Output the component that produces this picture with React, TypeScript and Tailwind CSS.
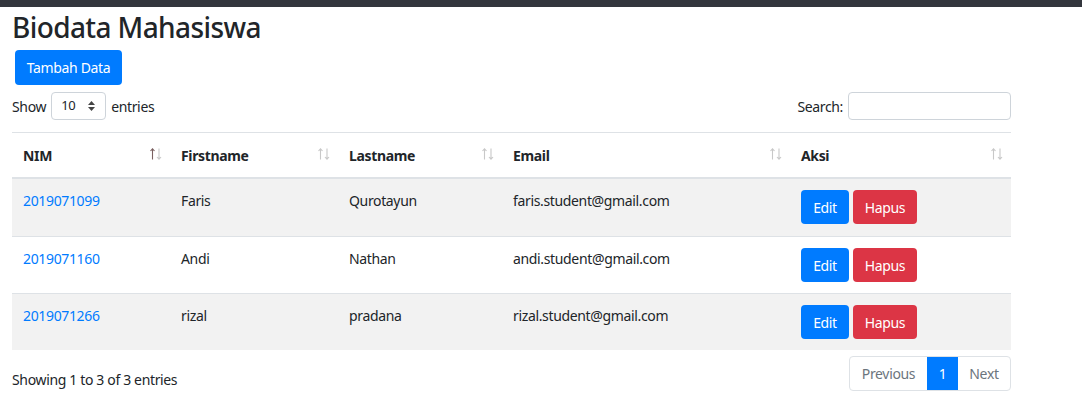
const rows = [
  { nim: "2019071099", first: "Faris", last: "Qurotayun", email: "faris.student@gmail.com" },
  { nim: "2019071160", first: "Andi", last: "Nathan", email: "andi.student@gmail.com" },
  { nim: "2019071266", first: "rizal", last: "pradana", email: "rizal.student@gmail.com" },
];

const cols = [
  { label: "NIM", w: "w-[158px]", active: true },
  { label: "Firstname", w: "w-[168px]" },
  { label: "Lastname", w: "w-[164px]" },
  { label: "Email", w: "w-[288px]" },
  { label: "Aksi", w: "w-[221px]" },
];

function SortIcon({ active }: { active?: boolean }) {
  return (
    <svg width="12" height="12" viewBox="0 0 12 12" fill="none" strokeWidth="1.1" className="absolute right-[8px] top-[15px]">
      <path d="M2.5 11.5 V1 M0.5 3 L2.5 0.8 L4.5 3" stroke={active ? "#7a6060" : "#c8c8c8"} />
      <path d="M9 0.5 V11 M7 9 L9 11.2 L11 9" stroke="#c8c8c8" />
    </svg>
  );
}

export default function App() {
  return (
    <div className="w-[1082px] h-[420px] bg-white text-[#212529] font-['Noto_Sans',sans-serif] text-[14px] tracking-[-0.35px]">
      <div className="h-[7px] bg-[#33363d]" />
      <div className="px-[12px] w-[999px] box-content">
        <h3 className="text-[28px] leading-[36px] font-medium mt-[2px] tracking-[-0.6px]">Biodata Mahasiswa</h3>
        <button className="ml-[3px] mt-[5px] h-[35px] w-[107px] bg-[#007bff] text-white rounded-[4px] text-[14px]">
          Tambah Data
        </button>
        <div className="flex justify-between items-center mt-[7px] h-[28px]">
          <div className="flex items-center gap-[5px]">
            <span>Show</span>
            <div className="w-[55px] h-[28px] border border-[#ced4da] rounded-[4px] flex items-center justify-between pl-[9px] pr-[10px] text-[13px]">
              <span>10</span>
              <svg width="7" height="10" viewBox="0 0 7 10" className="text-[#444]">
                <path d="M3.5 0 L7 4 L0 4 Z M0 6 L7 6 L3.5 10 Z" fill="currentColor" />
              </svg>
            </div>
            <span>entries</span>
          </div>
          <div className="flex items-center gap-[5px]">
            <span>Search:</span>
            <div className="w-[163px] h-[28px] border border-[#ced4da] rounded-[4px]" />
          </div>
        </div>
        <div className="mt-[12px] border-t border-[#dee2e6] w-[999px]">
          <div className="flex h-[46px] border-b-2 border-[#dee2e6] font-bold">
            {cols.map((c) => (
              <div key={c.label} className={`${c.w} relative pl-[11px] pt-[12px]`}>
                {c.label}
                <SortIcon active={c.active} />
              </div>
            ))}
          </div>
          {rows.map((r, i) => (
            <div key={r.nim} className={`flex h-[57px] ${i > 0 ? "border-t border-[#dee2e6]" : ""} ${i % 2 === 0 ? "bg-[#f2f2f2]" : "bg-white"}`}>
              <div className="w-[158px] pl-[11px] pt-[11px] text-[#007bff]">{r.nim}</div>
              <div className="w-[168px] pl-[11px] pt-[11px]">{r.first}</div>
              <div className="w-[164px] pl-[11px] pt-[11px]">{r.last}</div>
              <div className="w-[288px] pl-[11px] pt-[11px]">{r.email}</div>
              <div className="w-[221px] pl-[11px] pt-[11px] flex gap-[4px] items-start">
                <button className="w-[48px] h-[34px] bg-[#007bff] text-white rounded-[4px]">Edit</button>
                <button className="w-[64px] h-[34px] bg-[#dc3545] text-white rounded-[4px]">Hapus</button>
              </div>
            </div>
          ))}
          <div className="flex justify-between items-start mt-[6px]">
            <div className="pt-[13px]">Showing 1 to 3 of 3 entries</div>
            <div className="flex h-[35px] border border-[#dee2e6] rounded-[4px] overflow-hidden">
              <div className="w-[77px] flex items-center justify-center text-[#6c757d]">Previous</div>
              <div className="w-[31px] flex items-center justify-center bg-[#007bff] text-white">1</div>
              <div className="w-[52px] flex items-center justify-center text-[#6c757d]">Next</div>
            </div>
          </div>
        </div>
      </div>
    </div>
  );
}
